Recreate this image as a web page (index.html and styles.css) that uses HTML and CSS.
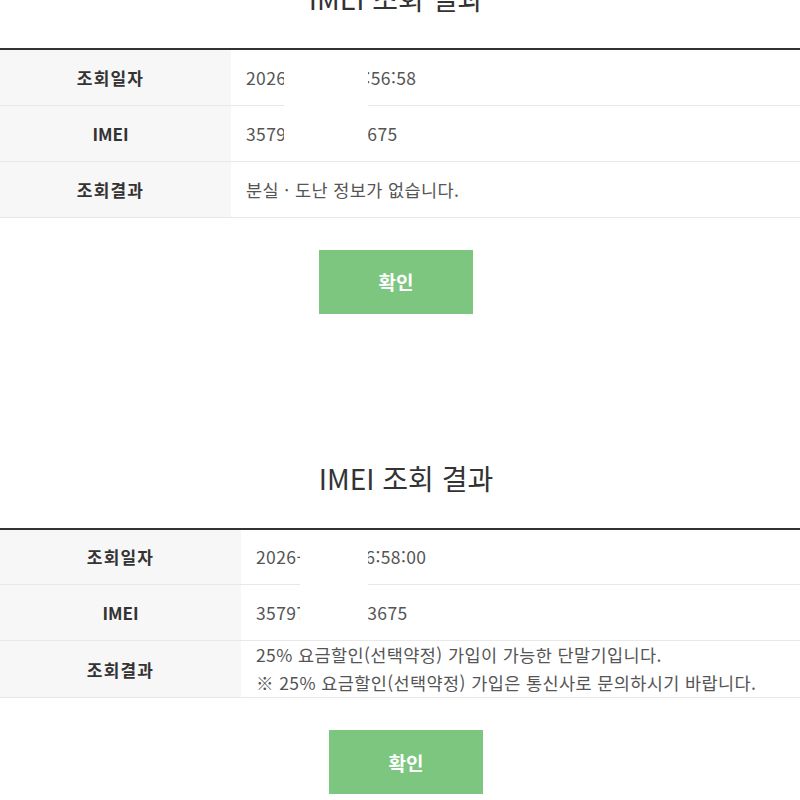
FILE: index.html
```html
<!DOCTYPE html>
<html lang="ko">
<head>
    <meta charset="UTF-8">
    <meta name="viewport" content="width=device-width, initial-scale=1.0">
    <title>IMEI 조회 결과</title>
    <link rel="stylesheet" href="styles.css">
</head>
<body>
    <div class="result result-first">
        <h2 class="result-title">IMEI 조회 결과</h2>
        <div class="table-wrap">
            <table class="result-table">
                <tr>
                    <th>조회일자</th>
                    <td>2026-01-15 14:56:58</td>
                </tr>
                <tr>
                    <th class="en">IMEI</th>
                    <td>357912345678675</td>
                </tr>
                <tr>
                    <th>조회결과</th>
                    <td>분실 · 도난 정보가 없습니다.</td>
                </tr>
            </table>
            <div class="mask mask-first"></div>
        </div>
        <div class="btn-area">
            <button type="button" class="btn-ok">확인</button>
        </div>
    </div>

    <div class="result result-second">
        <h2 class="result-title">IMEI 조회 결과</h2>
        <div class="table-wrap">
            <table class="result-table">
                <tr>
                    <th>조회일자</th>
                    <td>2026-01-15 16:58:00</td>
                </tr>
                <tr>
                    <th class="en">IMEI</th>
                    <td>357971234563675</td>
                </tr>
                <tr>
                    <th>조회결과</th>
                    <td class="multi">
                        25% 요금할인(선택약정) 가입이 가능한 단말기입니다.<br>
                        ※ 25% 요금할인(선택약정) 가입은 통신사로 문의하시기 바랍니다.
                    </td>
                </tr>
            </table>
            <div class="mask mask-second"></div>
        </div>
        <div class="btn-area">
            <button type="button" class="btn-ok">확인</button>
        </div>
    </div>
</body>
</html>
```

FILE: styles.css
```css
* {
    margin: 0;
    padding: 0;
    box-sizing: border-box;
}

body {
    width: 800px;
    height: 800px;
    overflow: hidden;
    background: #fff;
    font-family: "Noto Sans CJK KR", "Noto Sans", sans-serif;
    color: #333;
}

.result {
    width: 812px;
}

.result-first {
    margin-top: -22px;
    margin-left: -10px;
}

.result-second {
    margin-top: 144px;
}

.result-title {
    font-size: 28px;
    font-weight: 400;
    line-height: 40px;
    text-align: center;
    color: #333;
    margin-bottom: 30px;
}

.table-wrap {
    position: relative;
}

.result-table {
    width: 100%;
    border-collapse: collapse;
    border-top: 2px solid #333;
}

.result-table th,
.result-table td {
    height: 56px;
    border-bottom: 1px solid #e8e8e8;
    vertical-align: middle;
}

.result-table th {
    width: 241px;
    background: #f7f7f7;
    font-size: 17px;
    font-weight: 700;
    letter-spacing: 1.2px;
    color: #333;
    text-align: center;
}

.result-table th.en {
    letter-spacing: 0;
}

.result-table td {
    padding-left: 15px;
    font-size: 17.5px;
    letter-spacing: 0.4px;
    text-align: left;
    color: #555;
}

.result-table td.multi {
    line-height: 28px;
}

/* blanked-out part of the values */
.mask {
    position: absolute;
    top: 2px;
    height: 110px;
    background: #fff;
}

.mask-first {
    left: 294px;
    width: 84px;
}

.mask-second {
    left: 300px;
    width: 68px;
}

.btn-area {
    text-align: center;
    margin-top: 32px;
}

.btn-ok {
    width: 154px;
    height: 64px;
    border: none;
    background: #7cc67f;
    color: #fff;
    font-family: "Noto Sans CJK KR", "Noto Sans", sans-serif;
    font-size: 19px;
    font-weight: 700;
}
```
